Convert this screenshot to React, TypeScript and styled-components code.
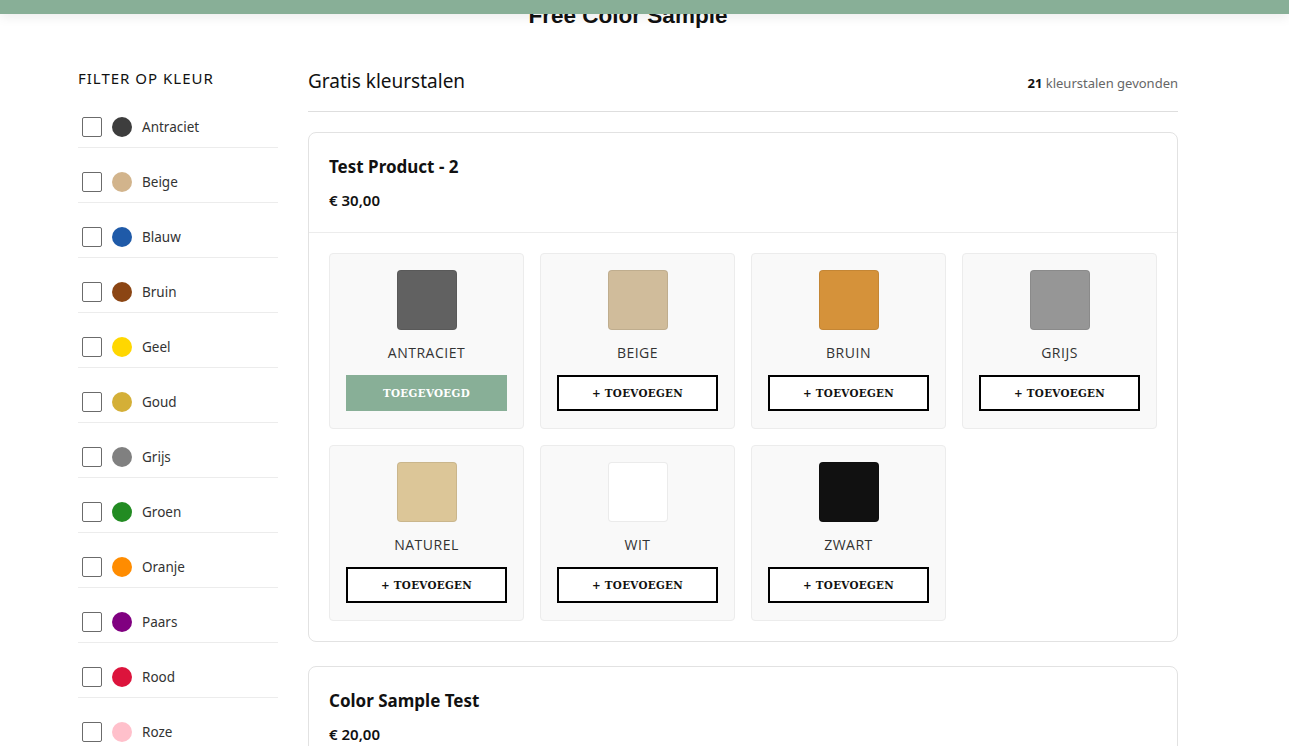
import React from "react";
import styled, { createGlobalStyle } from "styled-components";

const GlobalStyle = createGlobalStyle`
  * { box-sizing: border-box; }
  body {
    margin: 0;
    background: #ffffff;
    font-family: "Noto Sans", "Open Sans", sans-serif;
    color: #222;
  }
`;

const TopBar = styled.div`
  position: fixed;
  top: 0;
  left: 0;
  right: 0;
  height: 14px;
  background: #88af97;
  box-shadow: 0 3px 12px rgba(0, 0, 0, 0.08);
  z-index: 10;
`;

const Page = styled.div`
  width: 1100px;
  margin-left: 78px;
`;

const PageTitle = styled.h1`
  margin: 4px 0 0;
  font-family: "Liberation Sans", Arial, sans-serif;
  font-weight: 700;
  font-size: 22.5px;
  line-height: 24px;
  text-align: center;
  color: #111;
`;

const Layout = styled.div`
  display: grid;
  grid-template-columns: 200px 870px;
  column-gap: 30px;
  margin-top: 39px;
`;

const Sidebar = styled.aside`
  display: flex;
  flex-direction: column;
`;

const SidebarTitle = styled.h3`
  margin: 0 0 4px;
  font-family: "Noto Sans", sans-serif;
  font-weight: 400;
  font-size: 15px;
  line-height: 22px;
  letter-spacing: 1px;
  color: #111;
  text-transform: uppercase;
`;

const FilterList = styled.ul`
  list-style: none;
  margin: 0;
  padding: 0;
`;

const FilterRow = styled.li`
  display: flex;
  align-items: center;
  gap: 10px;
  padding: 24px 0 10px 4px;
  border-bottom: 1px solid #ececec;
`;

const CheckBox = styled.span`
  width: 20px;
  height: 20px;
  border: 1.5px solid #6b6b6b;
  border-radius: 2px;
  background: #fff;
  flex: none;
`;

const Dot = styled.span<{ $c: string }>`
  width: 20px;
  height: 20px;
  border-radius: 50%;
  background: ${(p) => p.$c};
  flex: none;
`;

const FilterLabel = styled.span`
  font-family: "Noto Sans", sans-serif;
  font-size: 13.5px;
  color: #333;
  line-height: 20px;
`;

const Main = styled.main`
  display: flex;
  flex-direction: column;
`;

const MainHeader = styled.div`
  display: flex;
  justify-content: space-between;
  align-items: baseline;
  padding: 2px 0 18px;
  border-bottom: 1px solid #dedede;
`;

const MainTitle = styled.h2`
  margin: 0;
  font-family: "Noto Sans", sans-serif;
  font-weight: 400;
  font-size: 19px;
  line-height: 24px;
  color: #111;
`;

const Count = styled.span`
  font-family: "Noto Sans", sans-serif;
  font-size: 13px;
  color: #666;
  b {
    color: #111;
    font-weight: 700;
  }
`;

const ProductCard = styled.section`
  margin-top: 20px;
  border: 1px solid #e2e2e2;
  border-radius: 8px;
  background: #fff;
  & + & {
    margin-top: 24px;
  }
`;

const ProductHead = styled.div`
  padding: 22px 20px 23px;
  border-bottom: 1px solid #ececec;
`;

const ProductTitle = styled.h3`
  margin: 0 0 10px;
  font-family: "Noto Sans", sans-serif;
  font-weight: 700;
  font-size: 17px;
  line-height: 24px;
  color: #111;
`;

const Price = styled.div`
  font-family: "Noto Sans", sans-serif;
  font-weight: 600;
  font-size: 15px;
  line-height: 20px;
  padding-top: 1px;
  margin-bottom: -1px;
  color: #111;
`;

const SwatchGrid = styled.div`
  display: grid;
  grid-template-columns: repeat(4, 1fr);
  gap: 16px;
  padding: 20px;
`;

const Swatch = styled.div`
  display: flex;
  flex-direction: column;
  align-items: center;
  padding: 16px 16px 17px;
  background: #f9f9f9;
  border: 1px solid #ececec;
  border-radius: 4px;
`;

const Chip = styled.div<{ $c: string }>`
  width: 60px;
  height: 60px;
  border-radius: 4px;
  background: ${(p) => p.$c};
  border: 1px solid rgba(0, 0, 0, 0.08);
`;

const SwatchName = styled.div`
  margin-top: 13px;
  margin-bottom: -1px;
  font-family: "Open Sans", "Noto Sans", sans-serif;
  font-size: 14px;
  line-height: 20px;
  letter-spacing: 0.5px;
  color: #333;
  text-transform: uppercase;
`;

const AddButton = styled.button<{ $added?: boolean }>`
  margin-top: 13px;
  width: 100%;
  height: 36px;
  font-family: "DejaVu Serif Condensed", "DejaVu Serif", serif;
  font-stretch: condensed;
  font-weight: 700;
  font-size: 11.5px;
  letter-spacing: 0.3px;
  text-transform: uppercase;
  cursor: pointer;
  border: ${(p) => (p.$added ? "none" : "2px solid #000")};
  background: ${(p) => (p.$added ? "#88af97" : "#fff")};
  color: ${(p) => (p.$added ? "#fff" : "#111")};
`;

const filters = [
  ["Antraciet", "#3d3d3d"],
  ["Beige", "#d2b48c"],
  ["Blauw", "#1f5aa8"],
  ["Bruin", "#8b4513"],
  ["Geel", "#ffd700"],
  ["Goud", "#d4af37"],
  ["Grijs", "#808080"],
  ["Groen", "#228b22"],
  ["Oranje", "#ff8c00"],
  ["Paars", "#800080"],
  ["Rood", "#dc143c"],
  ["Roze", "#ffc0cb"],
  ["Wit", "#ffffff"],
  ["Zwart", "#111111"],
];

type Sw = { name: string; color: string; added?: boolean };

const products: { title: string; price: string; swatches: Sw[] }[] = [
  {
    title: "Test Product - 2",
    price: "€ 30,00",
    swatches: [
      { name: "Antraciet", color: "#616161", added: true },
      { name: "Beige", color: "#d0bc9b" },
      { name: "Bruin", color: "#d5923a" },
      { name: "Grijs", color: "#969696" },
      { name: "Naturel", color: "#dcc698" },
      { name: "Wit", color: "#ffffff" },
      { name: "Zwart", color: "#111111" },
    ],
  },
  {
    title: "Color Sample Test",
    price: "€ 20,00",
    swatches: [
      { name: "Antraciet", color: "#616161" },
      { name: "Beige", color: "#d0bc9b" },
      { name: "Grijs", color: "#969696" },
      { name: "Zwart", color: "#111111" },
    ],
  },
];

export default function App() {
  return (
    <>
      <GlobalStyle />
      <TopBar />
      <Page>
        <PageTitle>Free Color Sample</PageTitle>
        <Layout>
          <Sidebar>
            <SidebarTitle>Filter op kleur</SidebarTitle>
            <FilterList>
              {filters.map(([n, c]) => (
                <FilterRow key={n}>
                  <CheckBox />
                  <Dot $c={c} />
                  <FilterLabel>{n}</FilterLabel>
                </FilterRow>
              ))}
            </FilterList>
          </Sidebar>
          <Main>
            <MainHeader>
              <MainTitle>Gratis kleurstalen</MainTitle>
              <Count>
                <b>21</b> kleurstalen gevonden
              </Count>
            </MainHeader>
            {products.map((p) => (
              <ProductCard key={p.title}>
                <ProductHead>
                  <ProductTitle>{p.title}</ProductTitle>
                  <Price>{p.price}</Price>
                </ProductHead>
                <SwatchGrid>
                  {p.swatches.map((s) => (
                    <Swatch key={s.name}>
                      <Chip $c={s.color} />
                      <SwatchName>{s.name}</SwatchName>
                      <AddButton $added={s.added}>
                        {s.added ? "Toegevoegd" : "+ Toevoegen"}
                      </AddButton>
                    </Swatch>
                  ))}
                </SwatchGrid>
              </ProductCard>
            ))}
          </Main>
        </Layout>
      </Page>
    </>
  );
}
